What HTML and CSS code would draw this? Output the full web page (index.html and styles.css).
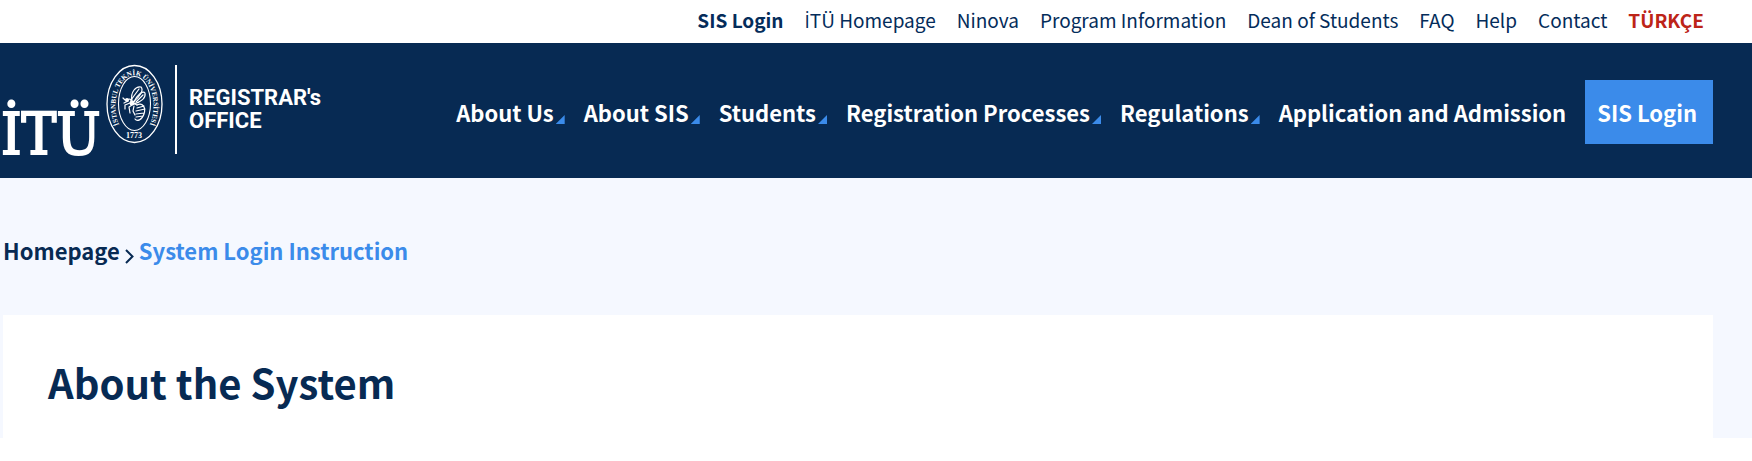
FILE: index.html
```html
<!DOCTYPE html>
<html lang="en">
<head>
<meta charset="utf-8">
<meta name="viewport" content="width=device-width, initial-scale=1">
<title>Registrar's Office - System Login Instruction</title>
<link rel="stylesheet" href="styles.css">
</head>
<body>
<nav class="topbar" aria-label="Quick links">
  <a class="strong" href="#">SIS Login</a>
  <a href="#"><span class="dotted">İ</span>TÜ Homepage</a>
  <a href="#">Ninova</a>
  <a href="#">Program Information</a>
  <a href="#">Dean of Students</a>
  <a href="#">FAQ</a>
  <a href="#">Help</a>
  <a href="#">Contact</a>
  <a class="language" href="#" lang="tr">TÜRKÇE</a>
</nav>
<header class="header">
  <a class="logo" href="#" aria-label="İTÜ Registrar's Office">
    <svg width="330" height="118" viewBox="0 60 330 118" fill="#fff">
      <text class="logo-itu" x="-2" y="154">İTÜ</text>
      <g fill="none" stroke="#fff">
        <ellipse cx="131.500" cy="104" rx="27.500" ry="38.500" stroke-width="1.300"/>
        <ellipse cx="131.500" cy="103.500" rx="16" ry="27" stroke-width="1.100"/>
        <path id="seal-arc" stroke="none" d="M118 128 A19 31 0 1 1 145 128"/>
        <g stroke-width="1.200" stroke-linecap="round" stroke-linejoin="round">
          <path d="M129 101 C127 92 133 86 138 87 C141 90 137 97 130 102"/>
          <path d="M131 102 C134 95 140 90 142 93 C143 98 138 102 131 104"/>
          <path d="M128 100 L136 89 M133 102 L140 95"/>
          <path d="M120 98 L122 100 L127 99 L130 103 L134 105 M121 103 L125 101 M127 103 L122 105 L122 109 M129 105 L126 107 L127 113 M131 106 L130 111 L132 115"/>
          <path d="M134 105 C140 102 143 108 141 114 C139 120 134 122 132 119 M134 108 L141 106 M133 111 L142 109 M133 114 L141 113 M133 117 L140 116"/>
        </g>
      </g>
      <circle cx="124" cy="100" r="2"/><circle cx="129" cy="103" r="2.500"/>
      <text class="logo-seal"><textPath href="#seal-arc" startOffset="50%" text-anchor="middle">İSTANBUL TEKNİK ÜNİVERSİTESİ</textPath></text>
      <text class="logo-year" x="131" y="138" text-anchor="middle">1773</text>
      <rect x="172" y="65" width="2" height="89"/>
      <text class="logo-office" x="186" y="105">REGISTRAR's</text>
      <text class="logo-office" x="186" y="128">OFFICE</text>
    </svg>
  </a>
  <nav class="menu" aria-label="Main">
    <a class="has-sub" href="#">About Us</a>
    <a class="has-sub" href="#">About SIS</a>
    <a class="has-sub" href="#">Students</a>
    <a class="has-sub" href="#">Registration Processes</a>
    <a class="has-sub" href="#">Regulations</a>
    <a href="#">Application and Admission</a>
    <a class="login" href="#">SIS Login</a>
  </nav>
</header>
<main class="page">
  <nav class="breadcrumb" aria-label="Breadcrumb">
    <a href="#">Homepage</a>
    <svg class="chevron" width="9" height="15" viewBox="0 0 9 15" fill="none" stroke="#072a53" stroke-width="2"><path d="M1 1l6.500 6.500L1 14"/></svg>
    <a class="current" href="#" aria-current="page">System Login Instruction</a>
  </nav>
  <section class="panel">
    <h1>About the System</h1>
  </section>
</main>
</body>
</html>
```
FILE: styles.css
```css
* {
  box-sizing: border-box;
}

body {
  margin: 0;
  background: #fff;
  color: #072a53;
  font-family: "Noto Sans CJK SC", "Noto Sans", sans-serif;
}

a {
  color: inherit;
  text-decoration: none;
  white-space: nowrap;
}

.topbar {
  display: flex;
  justify-content: flex-end;
  gap: 21px;
  padding: 5px 48px 8px 3px;
  color: #042c5a;
  font-size: 19px;
  line-height: 30px;
}

.topbar .strong,
.topbar .language {
  font-weight: 700;
}

.topbar .language {
  color: #bd2418;
}

.dotted {
  font-family: "Open Sans", sans-serif;
  line-height: 1;
}

.header {
  display: flex;
  justify-content: space-between;
  align-items: flex-start;
  padding: 17px 39px 0 3px;
  background: #072a53;
  color: #fff;
}

.logo svg {
  display: block;
  overflow: visible;
}

.logo-itu {
  font: 58px "DejaVu Serif Condensed", "DejaVu Serif", serif;
  stroke: #fff;
  stroke-width: 2px;
}

.logo-seal {
  font: 700 7px "Liberation Serif", serif;
}

.logo-year {
  font: 700 8px "Liberation Serif", serif;
}

.logo-office {
  font: 700 22px Roboto, sans-serif;
}

.menu {
  display: flex;
  align-items: center;
  gap: 19px;
  padding-top: 20px;
  font-size: 22px;
  font-weight: 700;
  line-height: 30px;
}

.has-sub {
  display: flex;
  align-items: flex-end;
  gap: 2px;
}

.has-sub::after {
  content: "";
  width: 9px;
  height: 9px;
  margin-bottom: 3px;
  background: #3b8bea;
  clip-path: polygon(100% 0, 100% 100%, 0 100%);
}

.login {
  padding: 17px 16px 17px 12px;
  background: #3b8bea;
}

.page {
  padding: 56px 39px 0 3px;
  background: #f5f8ff;
}

.breadcrumb {
  display: flex;
  align-items: center;
  gap: 5px;
  margin-bottom: 49px;
  font-size: 22px;
  font-weight: 700;
  line-height: 32px;
}

.chevron {
  margin-top: 12px;
}

.breadcrumb .current {
  color: #3b8bea;
}

.panel {
  padding: 37px 45px 26px;
  background: #fff;
}

h1 {
  margin: 0;
  font-size: 40px;
  font-weight: 700;
  line-height: 60px;
}
```
